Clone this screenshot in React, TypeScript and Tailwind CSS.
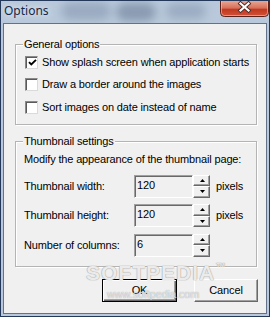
import React from "react";

const ui =
  "font-['Liberation_Sans',Arial,sans-serif] text-[11px] leading-[13px] tracking-[-0.15px] text-black";

const CheckBox: React.FC<{ checked?: boolean }> = ({ checked }) => (
  <span className="flex h-[13px] w-[13px] shrink-0 items-center justify-center border border-t-[#8a8a8a] border-l-[#8a8a8a] border-r-[#dadada] border-b-[#dadada] bg-white shadow-[inset_1px_1px_0_#5a5a5a]">
    {checked && (
      <svg width="9" height="9" viewBox="0 0 9 9" className="ml-[1px] mt-[1px]">
        <path d="M1 4.2 L3.3 6.5 L8 1.8" stroke="#000" strokeWidth="1.9" fill="none" />
      </svg>
    )}
  </span>
);

const CheckRow: React.FC<{ label: string; checked?: boolean }> = ({ label, checked }) => (
  <label className="flex h-[22.5px] items-center pl-[9px]">
    <CheckBox checked={checked} />
    <span className="ml-[4px]">{label}</span>
  </label>
);

const GroupBox: React.FC<{ title: string; className?: string; children: React.ReactNode }> = ({
  title,
  className,
  children,
}) => (
  <fieldset
    className={
      "ml-[11px] w-[242px] border border-[#b4b4b4] shadow-[inset_1px_1px_0_#fff,1px_1px_0_#fff] " +
      (className ?? "")
    }
  >
    <legend className="ml-[7px] bg-[#f0f0f0] px-[1px]">{title}</legend>
    {children}
  </fieldset>
);

const Arrow: React.FC<{ up?: boolean }> = ({ up }) => (
  <svg width="5" height="3" viewBox="0 0 5 3">
    <path d={up ? "M0 3 L2.5 0 L5 3 Z" : "M0 0 L5 0 L2.5 3 Z"} fill="#000" />
  </svg>
);

const SpinRow: React.FC<{ label: string; value: string; unit?: boolean }> = ({ label, value, unit }) => (
  <div className="flex h-[23px] items-center">
    <span className="w-[110px]">{label}</span>
    <div className="h-[23px] w-[59px] border border-t-[#a0a0a0] border-l-[#a0a0a0] border-r-white border-b-white bg-[#f0f0f0] pl-[2px] pt-[3px] shadow-[inset_1px_1px_0_#696969]">
      {value}
    </div>
    <div className="flex h-[23px] w-[17px] flex-col">
      <div className="flex h-[11.5px] items-center justify-center border border-t-white border-l-white border-r-[#696969] border-b-[#696969] bg-[#f0f0f0] pl-[2px] shadow-[inset_-1px_-1px_0_#a0a0a0]">
        <Arrow up />
      </div>
      <div className="flex h-[11.5px] items-center justify-center border border-t-white border-l-white border-r-[#696969] border-b-[#696969] bg-[#f0f0f0] pl-[2px] shadow-[inset_-1px_-1px_0_#a0a0a0]">
        <Arrow />
      </div>
    </div>
    {unit && <span className="ml-[6px]">pixels</span>}
  </div>
);

// Aero-style red close button
const CloseButton: React.FC = () => (
  <svg width="49" height="16" viewBox="0 0 49 16" className="shrink-0">
    <defs>
      <linearGradient id="closeFill" x1="0" y1="0" x2="0" y2="1">
        <stop offset="0" stopColor="#e8a593" />
        <stop offset="0.45" stopColor="#d7705a" />
        <stop offset="0.55" stopColor="#c2391f" />
        <stop offset="1" stopColor="#d0533a" />
      </linearGradient>
    </defs>
    <path d="M0.5 0 V11.5 Q0.5 15.5 4.5 15.5 H44.5 Q48.5 15.5 48.5 11.5 V0" fill="url(#closeFill)" stroke="#5c2219" />
    <path d="M1.5 0 V11.5 Q1.5 14.5 4.5 14.5 H44.5 Q47.5 14.5 47.5 11.5 V0" fill="none" stroke="#f3c3b6" strokeOpacity="0.6" />
    <path d="M20.5 2.5 L28.5 9.5 M28.5 2.5 L20.5 9.5" stroke="#4b2a26" strokeWidth="4" strokeLinecap="square" />
    <path d="M20.5 2.5 L28.5 9.5 M28.5 2.5 L20.5 9.5" stroke="#ffffff" strokeWidth="2.2" strokeLinecap="square" />
  </svg>
);

const App: React.FC = () => {
  return (
    <div className="relative flex h-[317px] w-[270px] flex-col overflow-hidden border border-[#24385a] bg-[#b9c9db]">
      {/* blurred glass behind the title */}
      <div className="pointer-events-none absolute left-[60px] top-[1px] h-[18px] w-[50px] rounded-full bg-[#8597b0] opacity-60 blur-[5px]" />
      <div className="pointer-events-none absolute left-[115px] top-[2px] h-[18px] w-[40px] rounded-full bg-[#5a6d88] opacity-50 blur-[5px]" />
      <div className="pointer-events-none absolute left-[165px] top-[2px] h-[16px] w-[40px] rounded-full bg-[#7d90aa] opacity-50 blur-[5px]" />

      {/* Title bar */}
      <div className="relative flex h-[22px] shrink-0 items-start justify-between">
        <span className="ml-[3px] mt-[2px] font-['Noto_Sans',sans-serif] text-[12px] leading-[16px] text-[#152846] [text-shadow:0_0_6px_#ffffff]">
          Options
        </span>
        <CloseButton />
      </div>

      {/* Client area */}
      <div className={"relative mx-[2px] mb-[2px] flex flex-1 flex-col border border-[#62728a] bg-[#f0f0f0] " + ui}>
        <GroupBox title="General options" className="mt-[14px] pb-[5px]">
          <CheckRow label="Show splash screen when application starts" checked />
          <CheckRow label="Draw a border around the images" />
          <CheckRow label="Sort images on date instead of name" />
        </GroupBox>

        <GroupBox title="Thumbnail settings" className="mt-[10px] pb-[9px]">
          <div className="mt-[5px] pl-[8px]">Modify the appearance of the thumbnail page:</div>
          <div className="mt-[9px] flex flex-col gap-[6.5px] pl-[8px]">
            <SpinRow label="Thumbnail width:" value="120" unit />
            <SpinRow label="Thumbnail height:" value="120" unit />
            <SpinRow label="Number of columns:" value="6" />
          </div>
        </GroupBox>

        <div className="mr-[8px] mt-[12px] flex justify-end gap-[17px]">
          <button className="flex h-[23px] w-[75px] items-center justify-center border border-black bg-[#f0f0f0] shadow-[inset_1px_1px_0_#fff,inset_-1px_-1px_0_#696969,inset_-2px_-2px_0_#a0a0a0]">
            OK
          </button>
          <button className="flex h-[23px] w-[64px] items-center justify-center border border-t-white border-l-white border-r-[#696969] border-b-[#696969] bg-[#f0f0f0] shadow-[inset_-1px_-1px_0_#a0a0a0]">
            Cancel
          </button>
        </div>

        {/* watermark */}
        <div className="pointer-events-none absolute left-[82px] top-[238px] font-['Liberation_Sans',sans-serif] text-[21px] font-bold leading-[22px] tracking-[1px] text-white/80 [text-shadow:0_0_1px_#9a9a9a,0_0_1px_#9a9a9a]">
          SOFTPEDIA
          <span className="ml-[1px] align-top text-[6px] leading-[6px] tracking-normal">TM</span>
        </div>
        <div className="pointer-events-none absolute left-[103px] top-[264px] font-['Liberation_Sans_Narrow','Liberation_Sans',sans-serif] text-[11px] leading-[12px] text-white/70 [text-shadow:0_0_1px_#8a8a8a]">
          www.softpedia.com
        </div>
      </div>
    </div>
  );
};

export default App;
